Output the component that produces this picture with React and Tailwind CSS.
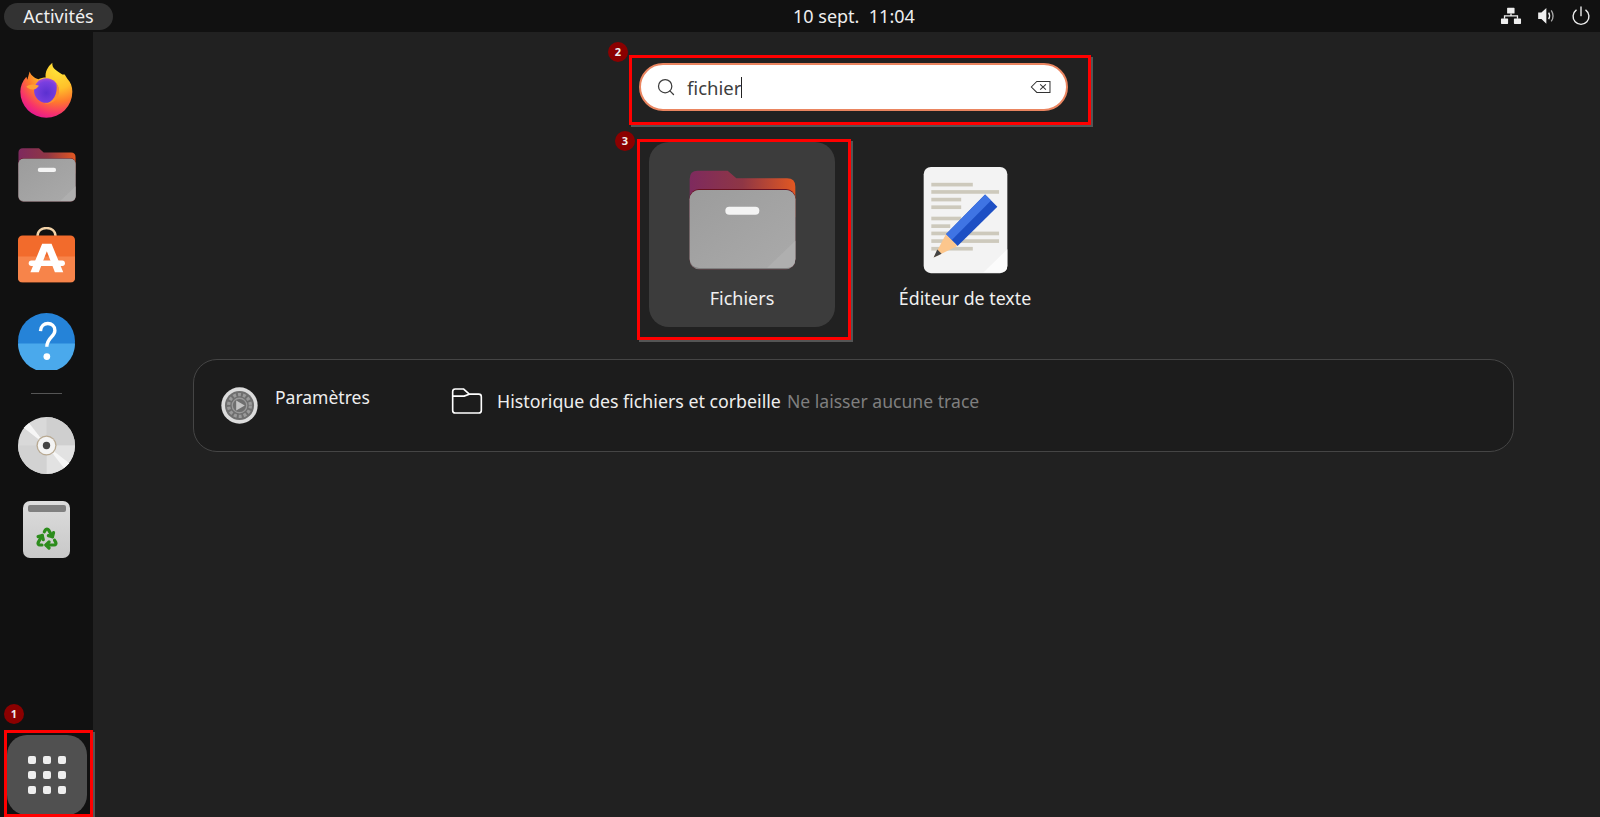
import React from "react";
import { Recycle, Search } from "lucide-react";

// icons below use the crop coordinates of the reference as viewBox
function Firefox({ className }) {
  return (
    <svg className={className} viewBox="60 185 165 170">
      <defs>
        <radialGradient id="ffBody" cx="0.72" cy="0.1" r="0.98">
          <stop offset="0" stopColor="#ffe63a" />
          <stop offset="0.38" stopColor="#ffc02a" />
          <stop offset="0.62" stopColor="#ff7a2c" />
          <stop offset="0.84" stopColor="#f7346a" />
          <stop offset="1" stopColor="#e31595" />
        </radialGradient>
        <radialGradient id="ffGlobe" cx="0.5" cy="0.6" r="0.6">
          <stop offset="0" stopColor="#5b30d0" />
          <stop offset="0.75" stopColor="#7a3fe0" />
          <stop offset="1" stopColor="#a64bd8" />
        </radialGradient>
      </defs>
      <path
        d="M64 274C64 258 70 243 82 229L85 238L92 213C96 226 108 233 118 236C125 233 133 231 140 231C138 215 145 200 160 187C158 205 175 212 190 222L197 222L205 235C215 245 220 258 220 274A78 78 0 0 1 64 274Z"
        fill="url(#ffBody)"
      />
      <circle cx="142" cy="270" r="37" fill="url(#ffGlobe)" />
      <path d="M82 258C92 250 106 250 120 256C114 264 108 268 100 267C92 267 86 263 82 258Z" fill="#ffa033" />
      <path d="M172 248C184 262 183 285 168 300C158 308 147 311 136 310C162 307 178 280 172 248Z" fill="#ff8f30" />
    </svg>
  );
}

function FolderColor({ className }) {
  return (
    <svg className={className} viewBox="236 118 321 300">
      <defs>
        <linearGradient id="folderBack" x1="0" y1="0" x2="1" y2="0">
          <stop offset="0" stopColor="#7e2a5e" />
          <stop offset="0.5" stopColor="#8f3645" />
          <stop offset="1" stopColor="#e25822" />
        </linearGradient>
        <linearGradient id="folderFront" x1="0" y1="0" x2="1" y2="1">
          <stop offset="0" stopColor="#9c9c9c" />
          <stop offset="1" stopColor="#aaaaaa" />
        </linearGradient>
      </defs>
      <path d="M238 145Q238 120 262 120H352L378 143H530Q555 143 555 168V260H238Z" fill="url(#folderBack)" />
      <rect x="238" y="175" width="317" height="241" rx="28" fill="#6a1020" />
      <rect x="238" y="178" width="317" height="238" rx="28" fill="#808080" />
      <rect x="238" y="178" width="317" height="234" rx="28" fill="url(#folderFront)" />
      <path d="M470 412L555 330V384Q555 412 527 412Z" fill="#afafaf" />
      <rect x="345" y="228" width="102" height="24" rx="12" fill="#f4f4f4" />
    </svg>
  );
}

function Store({ className }) {
  return (
    <svg className={className} viewBox="55 680 170 170">
      <path d="M113 708C113 692 125 683 140 683C155 683 167 692 167 708" fill="none" stroke="#f3d3a8" strokeWidth="7" />
      <rect x="55" y="705" width="170" height="140" rx="14" fill="#f26b2c" />
      <path d="M55 768H225V831Q225 845 211 845H69Q55 845 55 831Z" fill="#f7844a" />
      <path d="M127 730H155L190 815H165L141 752L117 815H92Z" fill="#fff" />
      <rect x="87" y="780" width="108" height="16" rx="8" fill="#fff" />
    </svg>
  );
}

function Help({ className }) {
  return (
    <svg className={className} viewBox="55 96 170 170">
      <circle cx="140" cy="181" r="85" fill="#2583d8" />
      <path d="M55 187H225A85 85 0 0 1 55 187Z" fill="#4aa9ec" />
      <path d="M122 150C124 118 165 122 165 148C165 168 141 168 141 197" fill="none" stroke="#fff" strokeWidth="10" />
      <circle cx="141" cy="226" r="10" fill="#fff" />
    </svg>
  );
}

function Disc({ className }) {
  return (
    <svg className={className} viewBox="55 410 170 170">
      <circle cx="140" cy="495" r="85" fill="#d9d9d9" />
      <path d="M140 410A85 85 0 0 1 225 495H140Z" fill="#cfcfcf" />
      <path d="M140 495H225A85 85 0 0 1 140 580Z" fill="#e2e2e2" />
      <path d="M140 495V580A85 85 0 0 1 55 495Z" fill="#d2d2d2" />
      <path d="M140 495L72 442L88 428Z" fill="#f6f6f6" />
      <path d="M140 495L208 548L192 562Z" fill="#f6f6f6" />
      <circle cx="140" cy="495" r="30" fill="#b8a992" />
      <circle cx="140" cy="495" r="26" fill="#f4f4f4" />
      <circle cx="140" cy="495" r="11" fill="#444" />
    </svg>
  );
}

function PageEdit({ className }) {
  const lines = [
    [95, 125], [117, 204], [140, 90], [163, 90], [197, 90], [220, 57], [242, 204], [265, 204], [288, 125],
  ];
  return (
    <svg className={className} viewBox="128 45 256 324">
      <rect x="130" y="47" width="252" height="320" rx="22" fill="#f3f3f3" />
      <path d="M310 365L382 295V345Q382 365 360 365Z" fill="#fcfcfc" />
      {lines.map(([y, w]) => (
        <rect key={y} x="153" y={y} width={w} height="11" fill="#cdc9bc" />
      ))}
      <path d="M315 130L352 167L232 285L197 250Z" fill="#1d4fc4" />
      <path d="M315 130L333 148L214 268L197 250Z" fill="#3f74e4" />
      <path d="M197 250L232 285L160 320Z" fill="#fcc68c" />
      <path d="M160 320L171 296L184 309Z" fill="#444" />
    </svg>
  );
}

function Settings({ className }) {
  return (
    <svg className={className} viewBox="122 111 112 112">
      <circle cx="178" cy="167" r="55" fill="#dcdcdc" />
      <circle cx="178" cy="167" r="44" fill="#6f6f6f" />
      <circle cx="178" cy="167" r="33" fill="none" stroke="#9a9a9a" strokeWidth="10" strokeDasharray="9 6" />
      <circle cx="178" cy="167" r="22" fill="none" stroke="#9a9a9a" strokeWidth="4" />
      <path d="M168 152L194 167L168 182Z" fill="#c4c4c4" />
    </svg>
  );
}

function FolderOutline({ className }) {
  return (
    <svg className={className} viewBox="810 108 98 86" fill="none" stroke="#fff" strokeWidth="5" strokeLinejoin="round">
      <path d="M815 122Q815 114 823 114H848L866 130H895Q903 130 903 138V180Q903 188 895 188H823Q815 188 815 180Z" />
      <path d="M815 136H850L866 130" />
    </svg>
  );
}

function Backspace({ className }) {
  return (
    <svg className={className} viewBox="1290 140 62 40" fill="none" stroke="#333" strokeWidth="3">
      <path d="M1349 143.5V176H1310L1294 160L1310 143.5Z" />
      <path d="M1320 152L1337 168M1337 152L1320 168" />
    </svg>
  );
}

function Network({ className }) {
  return (
    <svg className={className} viewBox="90 20 68 55" fill="#eee">
      <rect x="112" y="22" width="23" height="18" rx="2" />
      <rect x="93" y="55" width="22" height="17" rx="2" />
      <rect x="133" y="55" width="22" height="17" rx="2" />
      <path d="M104 56V47H144V56M124 40V47" fill="none" stroke="#eee" strokeWidth="4" />
    </svg>
  );
}

function Speaker({ className }) {
  return (
    <svg className={className} viewBox="202 20 60 55">
      <path d="M205 37H215L230 23V71L215 57H205Z" fill="#eee" />
      <path d="M237 37Q243 47 237 57" fill="none" stroke="#eee" strokeWidth="4" />
      <path d="M245 30Q256 47 245 64" fill="none" stroke="#aaa" strokeWidth="4" />
    </svg>
  );
}

function Power({ className }) {
  return (
    <svg className={className} viewBox="306 18 58 58" fill="none" stroke="#eee" strokeWidth="4" strokeLinecap="round">
      <path d="M321 30A23 23 0 1 0 349 30" />
      <path d="M335 21V46" />
    </svg>
  );
}

function Badge({ n, className }) {
  return (
    <div className={`absolute flex h-5 w-5 items-center justify-center rounded-full bg-[#8b0000] text-[11px] font-bold text-[#eee] ${className}`}>
      {n}
    </div>
  );
}

function RedBox({ className }) {
  return <div className={`absolute border-[3px] border-[#ff0000] shadow-[2px_2px_0_#555] ${className}`} />;
}

export default function App() {
  return (
    <div className="relative flex h-[817px] w-[1600px] flex-col overflow-hidden bg-[#212121] font-['Noto_Sans',sans-serif] text-white">
      <header className="relative flex h-8 shrink-0 items-center justify-between bg-[#111111] pl-1 pr-[9px]">
        <div className="flex h-[27px] w-[109px] items-center justify-center rounded-full bg-[#333333] text-[18px] text-[#f0f0f0]">
          Activités
        </div>
        <div className="absolute left-[793px] top-0 flex h-8 items-center whitespace-pre text-[18px] text-[#eeeeee]">
          10 sept.  11:04
        </div>
        <div className="flex items-center">
          <Network className="mr-[15px] h-[18px] w-[22px]" />
          <Speaker className="mr-[14px] h-[18px] w-[20px]" />
          <Power className="h-[20px] w-[20px]" />
        </div>
      </header>

      <div className="flex min-h-0 flex-1">
        <aside className="flex w-[93px] shrink-0 flex-col items-center bg-[#111111]">
          <Firefox className="mt-[30px] h-[57px] w-[55px]" />
          <FolderColor className="mt-[29px] h-[54px] w-[58px]" />
          <Store className="mt-[25px] h-[57px] w-[57px]" />
          <Help className="mt-[29px] h-[57px] w-[57px]" />
          <div className="mt-[23px] h-px w-[31px] bg-[#555555]" />
          <Disc className="mt-[23px] h-[57px] w-[57px]" />
          <div className="mt-[27px] flex h-[57px] w-[47px] flex-col items-center rounded-[7px] bg-gradient-to-b from-[#dddddd] to-[#c8c8c8] pt-[4px]">
            <div className="h-[7px] w-[38px] rounded-[2px] bg-[#808080]" />
            <Recycle className="mt-[14px] h-6 w-6 text-[#2c8c1c]" strokeWidth={3.2} />
          </div>
          <div className="mb-[2px] mt-auto flex h-[80px] w-[80px] items-center justify-center rounded-[20px] bg-[#505050]">
            <div className="grid grid-cols-3 gap-[7px]">
              {Array.from({ length: 9 }).map((_, i) => (
                <div key={i} className="h-2 w-2 rounded-[2px] bg-[#eeeeee]" />
              ))}
            </div>
          </div>
        </aside>

        <main className="flex-1">
          <div className="ml-[546px] mt-[31px] flex h-[48px] w-[429px] items-center rounded-full border-2 border-[#ea8560] bg-white pl-[15px] pr-[15px] text-[#3d3d3d]">
            <Search className="h-[20px] w-[20px]" strokeWidth={1.5} />
            <span className="ml-[11px] border-r border-[#222] text-[18.5px] leading-[21px]">fichier</span>
            <Backspace className="ml-auto h-[14px] w-[21px]" />
          </div>

          <div className="ml-[556px] mt-[31px] flex gap-[37px]">
            <div className="flex h-[185px] w-[186px] flex-col items-center rounded-[20px] bg-[#3c3c3c] pt-[28px]">
              <FolderColor className="h-[100px] w-[107px]" />
              <span className="mt-[15px] text-[18px] text-[#f0f0f0]">Fichiers</span>
            </div>
            <div className="flex h-[185px] w-[186px] flex-col items-center pt-[24px]">
              <PageEdit className="h-[108px] w-[85px]" />
              <span className="mt-[11px] text-[17.8px] text-[#f0f0f0]">Éditeur de texte</span>
            </div>
          </div>

          <div className="ml-[100px] mt-[32px] flex h-[93px] w-[1321px] rounded-[24px] border border-[#454545] bg-[#1c1c1c] pl-[27px] pt-[27px]">
            <Settings className="h-[37px] w-[37px]" />
            <span className="ml-[17px] w-[176px] text-[17.5px] leading-[20px] text-[#eeeeee]">Paramètres</span>
            <FolderOutline className="h-[28px] w-[32px]" />
            <span className="ml-[14px] mt-[2px] text-[17.8px] leading-[24px] text-[#eeeeee]">Historique des fichiers et corbeille</span>
            <span className="ml-[6px] mt-[2px] text-[17.6px] leading-[24px] text-[#7f7f7f]">Ne laisser aucune trace</span>
          </div>
        </main>
      </div>

      {/* annotations drawn over the screenshot */}
      <RedBox className="left-[4px] top-[730px] h-[87px] w-[89px]" />
      <Badge n="1" className="left-[4px] top-[704px]" />
      <RedBox className="left-[629px] top-[55px] h-[70px] w-[462px]" />
      <Badge n="2" className="left-[608px] top-[42px]" />
      <RedBox className="left-[637px] top-[139px] h-[201px] w-[214px]" />
      <Badge n="3" className="left-[615px] top-[131px]" />
    </div>
  );
}
